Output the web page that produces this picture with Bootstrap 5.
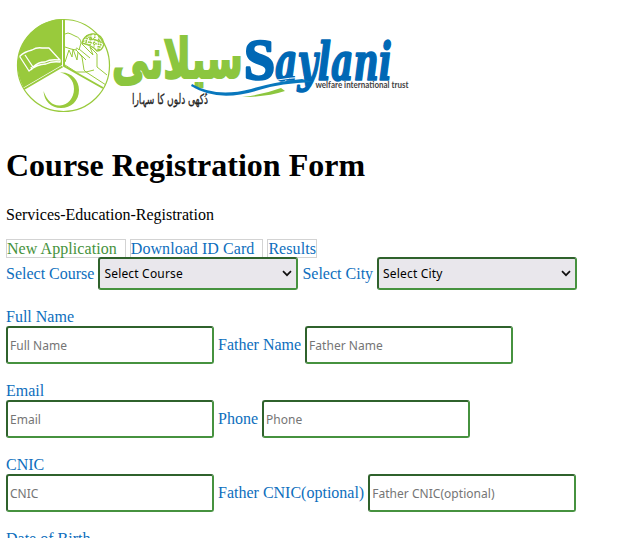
<!DOCTYPE html>
<html lang="en">
<head>
<meta charset="utf-8">
<meta name="viewport" content="width=device-width, initial-scale=1">
<title>Course Registration Form</title>
<link href="https://cdn.jsdelivr.net/npm/bootstrap@5.3.0/dist/css/bootstrap.min.css" rel="stylesheet">
<style>
  body { font-family: "Liberation Serif", "Times New Roman", serif; font-size: 16px; line-height: 18px; color: #000; overflow: hidden; }
  .page { padding-left: 6px; }
  .logo { width: 410px; height: 147px; margin-left: -6px; }
  h1.title { font-size: 32px; line-height: 37px; font-weight: 700; margin-bottom: 22px; }
  .crumbs { margin-bottom: 15px; }
  .tabs { gap: 4px; height: 18px; }
  .tab { border: 1px solid #d3d3d3; color: #0d6ebd; text-decoration: none; height: 19px; line-height: 18px; white-space: nowrap; letter-spacing: .06px; }
  .tab.current { color: #46923c; }
  .wide { padding-right: 8px; }
  label { color: #0d6ebd; white-space: nowrap; }
  .line { gap: 4px; }
  .field.form-control, .field.form-select { font-family: "Noto Sans", Tahoma, sans-serif; font-size: 12px; line-height: 16px; border: 2px solid; border-color: #2f622c #46923f #46923f #2f622c; border-radius: 3px; flex: none; color: #000; }
  .field.form-control { width: 208px; height: 38px; padding: 1px 2px; letter-spacing: .03px; }
  .field.form-control::placeholder { color: #757575; opacity: 1; }
  .field.form-select { width: 200px; height: 33px; padding: 0 20px 0 4px; letter-spacing: .18px; background-color: #e9e7ec; background-size: 10px 7px; background-position: right 4px center; background-image: url("data:image/svg+xml,%3Csvg xmlns='http://www.w3.org/2000/svg' viewBox='0 0 10 7'%3E%3Cpath d='M1 1.2 5 5.2 9 1.2' fill='none' stroke='%23111' stroke-width='1.7'/%3E%3C/svg%3E"); }
  .group { margin-bottom: 18px; }
  .group > label { display: block; }
</style>
</head>
<body class="bg-white">
<main class="page">
  <svg class="logo d-block" viewBox="0 0 410 147" role="img" aria-label="Saylani welfare international trust">
    <!-- emblem -->
    <circle cx="63.5" cy="65.5" r="46" fill="#fff" stroke="#99ca3c" stroke-width="1.2"/>
    <path d="M62 65V19A46 46 0 0 0 23.5 87.5Z" fill="#99ca3c"/>
    <path d="M64 19V66L103 88M62.5 66.5L24 89" fill="none" stroke="#99ca3c" stroke-width="2"/>
    <path d="M20 56Q24 52 32 50Q37 47 42 48L49 48L60 60L60 62Q52 61 46 64Q37 64 29 71L20 57Z M25 55L33 67Q38 62 45 62Q50 59 59 60M31 67L32 70" fill="none" stroke="#fff" stroke-width="1.3" stroke-linejoin="round"/>
    <path d="M43.5 91C47 101 53 106 60 105.5C68 105 74 98 74 89C74 80 68 74 60 72.5C71 71.500 79 80 79 90C79 101 71 108 61 108C51 108 44 101 43.500 91Z" fill="#99ca3c"/>
    <g fill="none" stroke="#99ca3c" stroke-width="1">
      <path d="M65 34Q68 32 71 34L75 36Q81 38 81 43L79 50Q76 46 76 50L71 49L65 47M65 62L69 50L72 57L73 49L77 60L78 52L82 57L84 70L86 72M65 65L76 72 86 72 106 85M76 50L86 60M79 49L90 58M82 44L93 55 90 47 97 54V67L107 75M86 72L94 70"/>
      <path d="M82 43Q84 35 92 34Q102 33 104 44Q102 51 97 51L94 48Q88 44 82 43Z" stroke-width="1.3"/>
      <path d="M84 38L101 41M83 41L102 45M86 36L103 43M91 34L90 45M95 34L94 47M99 36L98 50M87 35L86 43M102 39L99 50" stroke-width="1.6" stroke-dasharray="1.5 1"/>
    </g>
    <!-- Urdu wordmark -->
    <g transform="translate(112 78) scale(1 1.2)">
      <text x="0" y="0" font-family="DejaVu Sans, sans-serif" font-weight="700" font-size="46" textLength="131" lengthAdjust="spacingAndGlyphs" direction="ltr" fill="#8cc63f" stroke="#8cc63f" stroke-width="1.8">سیلانی</text>
    </g>
    <text x="132" y="104" font-family="DejaVu Sans, sans-serif" font-size="14" textLength="76" lengthAdjust="spacingAndGlyphs" direction="ltr" fill="#222" stroke="#222" stroke-width=".3">دُکھی دلوں کا سہارا</text>
    <!-- Latin wordmark -->
    <g fill="#0068b5" stroke="#0068b5" stroke-linejoin="round" transform="translate(0 80) scale(1 1.12)">
      <text x="244" y="-1" font-family="Liberation Serif, serif" font-weight="700" font-size="51" textLength="31" lengthAdjust="spacingAndGlyphs" stroke-width="2.200">S</text>
      <text x="275" y="0" font-family="DejaVu Serif Condensed, DejaVu Serif, serif" font-weight="700" font-style="italic" font-size="46" textLength="117" lengthAdjust="spacingAndGlyphs" stroke-width="1.400">aylani</text>
    </g>
    <path d="M192 84Q216 98 251 89Q274 82 302 79L313 82Q281 83 259 90Q218 103 191 86Z" fill="#0877bd"/>
    <path d="M250 86Q274 79 304 77" fill="none" stroke="#fff" stroke-width="1"/>
    <path d="M242 97Q262 95 281 88L285 91Q267 97 242 97Z" fill="#8cc63f"/>
    <text x="315.500" y="88" font-family="Lato, sans-serif" font-weight="700" font-size="8.500" textLength="93" lengthAdjust="spacingAndGlyphs" fill="#444">welfare international trust</text>
  </svg>
  <h1 class="title">Course Registration Form</h1>
  <p class="crumbs">Services-Education-Registration</p>
  <nav class="tabs d-flex">
    <a class="tab current wide" href="#">New Application</a>
    <a class="tab wide" href="#">Download ID Card</a>
    <a class="tab" href="#">Results</a>
  </nav>
  <form>
    <div class="line group d-flex align-items-center">
      <label for="course">Select Course</label>
      <select class="field form-select" id="course"><option>Select Course</option></select>
      <label for="city">Select City</label>
      <select class="field form-select" id="city"><option>Select City</option></select>
    </div>
    <div class="group">
      <label for="fullname">Full Name</label>
      <div class="line d-flex align-items-center">
        <input class="field form-control" id="fullname" placeholder="Full Name">
        <label for="father">Father Name</label>
        <input class="field form-control" id="father" placeholder="Father Name">
      </div>
    </div>
    <div class="group">
      <label for="email">Email</label>
      <div class="line d-flex align-items-center">
        <input class="field form-control" id="email" placeholder="Email">
        <label for="phone">Phone</label>
        <input class="field form-control" id="phone" placeholder="Phone">
      </div>
    </div>
    <div class="group">
      <label for="cnic">CNIC</label>
      <div class="line d-flex align-items-center">
        <input class="field form-control" id="cnic" placeholder="CNIC">
        <label for="fcnic">Father CNIC(optional)</label>
        <input class="field form-control" id="fcnic" placeholder="Father CNIC(optional)">
      </div>
    </div>
    <label>Date of Birth</label>
  </form>
</main>
<script src="https://cdn.jsdelivr.net/npm/bootstrap@5.3.0/dist/js/bootstrap.bundle.min.js"></script>
</body>
</html>
